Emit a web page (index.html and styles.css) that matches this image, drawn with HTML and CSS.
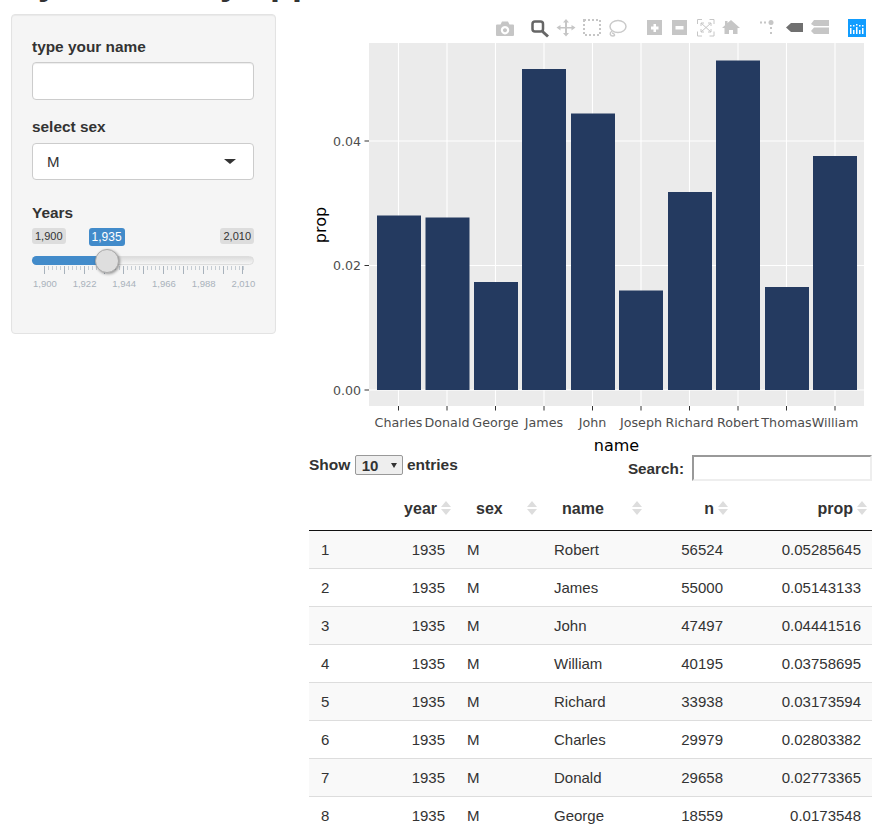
FILE: index.html
```html
<!DOCTYPE html>
<html lang="en">
<head>
    <meta charset="UTF-8">
    <meta name="viewport" content="width=device-width, initial-scale=1.0">
    <title>My first shiny app</title>
    <link rel="stylesheet" href="styles.css">
</head>
<body>
    <h2 class="page-title">My first shiny app</h2>
    <div class="layout">
        <div class="well">
            <div class="form-group">
                <label class="control-label">type your name</label>
                <input class="form-control" type="text">
            </div>
            <div class="form-group">
                <label class="control-label">select sex</label>
                <div class="selectize">
                    <span>M</span>
                    <span class="caret"></span>
                </div>
            </div>
            <div class="form-group">
                <label class="control-label">Years</label>
                <div class="slider">
                    <div class="slider-labels">
                        <span class="irs-label">1,900</span>
                        <span class="irs-label irs-from">1,935</span>
                        <span class="irs-label irs-max">2,010</span>
                    </div>
                    <div class="irs-line">
                        <div class="irs-fill"></div>
                        <div class="irs-handle"></div>
                    </div>
                    <div class="irs-ticks"></div>
                    <div class="irs-grid">
                        <span>1,900</span>
                        <span>1,922</span>
                        <span>1,944</span>
                        <span>1,966</span>
                        <span>1,988</span>
                        <span>2,010</span>
                    </div>
                </div>
            </div>
        </div>

        <div class="main">
            <svg class="plot" viewBox="309 14 563 441" width="563" height="441">
                <!-- modebar -->
                <g class="mb-icon">
                    <path fill-rule="evenodd" d="M497 24.500h3.500l1.500-3h6l1.500 3h3.500q1 0 1 1v9.500q0 1-1 1h-16q-1 0-1-1v-9.500q0-1 1-1zM505 26a4.200 4.200 0 1 0 .01 0zM505 28.200a2 2 0 1 1-.01 0z"/>
                </g>
                <g class="mb-stroke-dark">
                    <rect x="532.500" y="21.500" width="10.500" height="10" rx="2.500"/>
                    <path d="M542.500 31.500l5.500 5" stroke-width="3"/>
                </g>
                <g class="mb-icon">
                    <path d="M566 19l3 3.500h-2v4.500h4.500v-2l4 2.500-4 3v-2h-4.500v4.500h2l-3 3.500-3-3.500h2v-4.500h-4.500v2l-4-3 4-2.500v2h4.500v-4.500h-2z"/>
                </g>
                <rect class="mb-dotted" x="584" y="20" width="16" height="15"/>
                <g class="mb-stroke">
                    <ellipse cx="618" cy="26.500" rx="8" ry="6"/>
                    <path d="M612 31c-3 2-2 5 1 5s1-3-1-3"/>
                </g>
                <path class="mb-icon" fill-rule="evenodd" d="M647 20h15v15h-15zM653.500 24v2.500h-2.500v3h2.500v2.500h2.500v-2.500h2.500v-3h-2.500v-2.500z"/>
                <path class="mb-icon" fill-rule="evenodd" d="M672 20h15v15h-15zM675.500 26v3.500h8v-3.500z"/>
                <g class="mb-thin">
                    <path d="M697.500 24v-4.500h4.500M709.500 19.500h4.500v4.500M714 31.500v4.500h-4.500M702 36h-4.500v-4.500"/>
                    <path d="M701 23l10 9M711 23l-10 9M701 23h3M701 23v3M711 32h-3M711 32v-3M711 23h-3M711 23v3M701 32h3M701 32v-3"/>
                </g>
                <path class="mb-icon" d="M731 20l9 8h-2.500v6h-4.500v-4h-4v4h-4.500v-6h-2.500l3-2.700v-4.300h2.500v2.100z"/>
                <g class="mb-icon">
                    <circle cx="771" cy="22.500" r="2.500"/>
                    <rect x="760" y="21.500" width="2" height="2"/>
                    <rect x="764" y="21.500" width="2" height="2"/>
                    <rect x="770" y="27" width="2" height="2"/>
                    <rect x="770" y="32" width="2" height="2"/>
                </g>
                <path class="mb-dark" d="M786 27.500l5-4.500h12v9h-12z"/>
                <path class="mb-icon" d="M811 24l3-4h15v6h-15zM811 31l3-3.500h15v6.500h-15z"/>
                <rect class="mb-logo" x="848" y="19" width="18" height="18"/>
                <g class="mb-logo-marks">
                    <rect x="850" y="28" width="1.500" height="6"/>
                    <rect x="853" y="30" width="1.500" height="4"/>
                    <rect x="856" y="27" width="1.500" height="7"/>
                    <rect x="859" y="30" width="1.500" height="4"/>
                    <rect x="862" y="28" width="1.500" height="6"/>
                    <rect x="850" y="25" width="1.500" height="1.500"/>
                    <rect x="853" y="25" width="1.500" height="1.500"/>
                    <rect x="856" y="24" width="1.500" height="1.500"/>
                    <rect x="859" y="25" width="1.500" height="1.500"/>
                    <rect x="862" y="25" width="1.500" height="1.500"/>
                </g>

                <!-- panel and grid -->
                <rect class="panel" x="369" y="43" width="495" height="363"/>
                <path class="grid" d="M369 390H864M369 265.500H864M369 141H864M398.500 43V406M447 43V406M495.500 43V406M544 43V406M592.500 43V406M641 43V406M689.500 43V406M738 43V406M786.500 43V406M835 43V406"/>

                <!-- bars -->
                <g class="bars">
                    <rect x="377" y="215.500" width="44" height="174.500"/>
                    <rect x="425.500" y="217.500" width="44" height="172.500"/>
                    <rect x="474" y="282" width="44" height="108"/>
                    <rect x="522" y="69" width="44" height="321"/>
                    <rect x="571" y="113.500" width="44" height="276.500"/>
                    <rect x="619" y="290.500" width="44" height="99.500"/>
                    <rect x="668" y="192" width="44" height="198"/>
                    <rect x="716" y="60.500" width="44" height="329.500"/>
                    <rect x="765" y="287" width="44" height="103"/>
                    <rect x="813" y="156" width="44" height="234"/>
                </g>

                <!-- axes -->
                <path class="ticks" d="M364.500 390H369M364.500 265.500H369M364.500 141H369M398.500 406V410.500M447 406V410.500M495.500 406V410.500M544 406V410.500M592.500 406V410.500M641 406V410.500M689.500 406V410.500M738 406V410.500M786.500 406V410.500M835 406V410.500"/>
                <g class="y-labels">
                    <text x="361" y="394.500">0.00</text>
                    <text x="361" y="270">0.02</text>
                    <text x="361" y="145.500">0.04</text>
                </g>
                <g class="x-labels">
                    <text x="398.500" y="427">Charles</text>
                    <text x="447" y="427">Donald</text>
                    <text x="495.500" y="427">George</text>
                    <text x="544" y="427">James</text>
                    <text x="592.500" y="427">John</text>
                    <text x="641" y="427">Joseph</text>
                    <text x="689.500" y="427">Richard</text>
                    <text x="738" y="427">Robert</text>
                    <text x="786.500" y="427">Thomas</text>
                    <text x="835" y="427">William</text>
                </g>
                <text class="axis-title" x="616.500" y="451">name</text>
                <text class="axis-title" transform="rotate(-90 326 225)" x="326" y="225">prop</text>
            </svg>

            <div class="dt-controls">
                <div class="dt-length">
                    Show
                    <span class="dt-select-wrap">
                        <select class="dt-select"><option>10</option></select>
                    </span>
                    entries
                </div>
                <div class="dt-filter">
                    <label>Search:</label>
                    <input class="dt-search" type="search">
                </div>
            </div>

            <table class="dt">
                <colgroup>
                    <col class="c-idx">
                    <col class="c-year">
                    <col class="c-sex">
                    <col class="c-name">
                    <col class="c-n">
                    <col class="c-prop">
                </colgroup>
                <thead>
                    <tr>
                        <th class="no-sort"></th>
                        <th class="right">year</th>
                        <th>sex</th>
                        <th>name</th>
                        <th class="right">n</th>
                        <th class="right">prop</th>
                    </tr>
                </thead>
                <tbody>
                    <tr><td>1</td><td class="right">1935</td><td class="sex">M</td><td>Robert</td><td class="right count">56524</td><td class="right">0.05285645</td></tr>
                    <tr><td>2</td><td class="right">1935</td><td class="sex">M</td><td>James</td><td class="right count">55000</td><td class="right">0.05143133</td></tr>
                    <tr><td>3</td><td class="right">1935</td><td class="sex">M</td><td>John</td><td class="right count">47497</td><td class="right">0.04441516</td></tr>
                    <tr><td>4</td><td class="right">1935</td><td class="sex">M</td><td>William</td><td class="right count">40195</td><td class="right">0.03758695</td></tr>
                    <tr><td>5</td><td class="right">1935</td><td class="sex">M</td><td>Richard</td><td class="right count">33938</td><td class="right">0.03173594</td></tr>
                    <tr><td>6</td><td class="right">1935</td><td class="sex">M</td><td>Charles</td><td class="right count">29979</td><td class="right">0.02803382</td></tr>
                    <tr><td>7</td><td class="right">1935</td><td class="sex">M</td><td>Donald</td><td class="right count">29658</td><td class="right">0.02773365</td></tr>
                    <tr><td>8</td><td class="right">1935</td><td class="sex">M</td><td>George</td><td class="right count">18559</td><td class="right">0.0173548</td></tr>
                </tbody>
            </table>
        </div>
    </div>
</body>
</html>
```

FILE: styles.css
```css
html, body {
    height: 834px;
    overflow: hidden;
}
body {
    margin: 0;
    font-family: "Liberation Sans", Arial, sans-serif;
    font-size: 14px;
    color: #333;
    background-color: #fff;
}
.page-title {
    margin: -38px 0 0 8px;
    font-size: 36px;
    line-height: 40px;
    font-weight: bold;
    color: #333;
    white-space: nowrap;
}
.layout {
    display: flex;
    align-items: flex-start;
    margin-top: 12px;
    padding-left: 11px;
}

/* sidebar */
.well {
    box-sizing: border-box;
    width: 265px;
    height: 320px;
    padding: 22px 20px 19px;
    background-color: #f5f5f5;
    border: 1px solid #e3e3e3;
    border-radius: 4px;
    box-shadow: inset 0 1px 1px rgba(0, 0, 0, 0.05);
}
.form-group {
    margin-bottom: 17px;
}
.control-label {
    display: block;
    margin-bottom: 5px;
    font-size: 15.400px;
    line-height: 20px;
    font-weight: bold;
}
.form-control {
    display: block;
    box-sizing: border-box;
    width: 222px;
    height: 38px;
    border: 1px solid #ccc;
    border-radius: 4px;
    background-color: #fff;
    box-shadow: inset 0 1px 1px rgba(0, 0, 0, 0.075);
}
.selectize {
    display: flex;
    align-items: center;
    justify-content: space-between;
    box-sizing: border-box;
    width: 222px;
    height: 37px;
    margin: 6px 0 23px;
    padding: 0 17px 0 14px;
    border: 1px solid #ccc;
    border-radius: 4px;
    background-color: #fff;
    font-size: 15px;
}
.caret {
    width: 0;
    height: 0;
    border-left: 6px solid transparent;
    border-right: 6px solid transparent;
    border-top: 5px solid #333;
}

/* slider */
.slider {
    width: 222px;
    margin-top: 5px;
}
.slider-labels {
    display: flex;
    align-items: flex-start;
    height: 28px;
}
.irs-label {
    height: 16px;
    padding: 0 3px;
    font-size: 11px;
    line-height: 16px;
    border-radius: 3px;
    background-color: #ddd;
    color: #333;
}
.irs-from {
    height: 18px;
    margin-left: 23px;
    font-size: 12px;
    line-height: 18px;
    background-color: #428bca;
    color: #fff;
}
.irs-max {
    margin-left: auto;
}
.irs-line {
    position: relative;
    box-sizing: border-box;
    height: 9px;
    border: 1px solid #ddd;
    border-radius: 5px;
    background: linear-gradient(#dcdcdc, #f5f5f5);
}
.irs-fill {
    width: 75px;
    height: 9px;
    margin: -1px;
    border-radius: 5px 0 0 5px;
    background-color: #428bca;
}
.irs-handle {
    position: absolute;
    top: -8px;
    left: 62px;
    box-sizing: border-box;
    width: 24px;
    height: 24px;
    border: 1px solid #aaa;
    border-radius: 50%;
    background-color: #dedede;
    box-shadow: 1px 1px 3px rgba(0, 0, 0, 0.4);
}
.irs-ticks {
    height: 8px;
    margin: 1px 0 0 12px;
    width: 200px;
    background-image:
        repeating-linear-gradient(to right, #a8b2bc 0, #a8b2bc 1px, transparent 1px, transparent 19.85px),
        repeating-linear-gradient(to right, #c5ccd3 0, #c5ccd3 1px, transparent 1px, transparent 3.97px);
    background-size: 100% 8px, 100% 4px;
    background-repeat: no-repeat;
}
.irs-grid {
    display: grid;
    grid-template-columns: repeat(6, 39.7px);
    margin: 4px 0 0 -7px;
    font-size: 9.500px;
    line-height: 12px;
    text-align: center;
    color: #a9b2bb;
}

/* plot */
.main {
    width: 563px;
    margin-left: 33px;
}
.plot {
    display: block;
    font-family: "DejaVu Sans", sans-serif;
}
.mb-icon {
    fill: #c6c6c6;
}
.mb-dark {
    fill: #707070;
}
.mb-stroke-dark {
    fill: none;
    stroke: #666;
    stroke-width: 2.500;
}
.mb-stroke {
    fill: none;
    stroke: #cacaca;
    stroke-width: 1.500;
}
.mb-thin {
    fill: none;
    stroke: #c6c6c6;
    stroke-width: 1;
}
.mb-dotted {
    fill: none;
    stroke: #c6c6c6;
    stroke-width: 2;
    stroke-dasharray: 2 2;
}
.mb-logo {
    fill: #119dff;
}
.mb-logo-marks {
    fill: #fff;
}
.panel {
    fill: #ebebeb;
}
.grid {
    fill: none;
    stroke: #fff;
    stroke-width: 1.100;
}
.bars {
    fill: #243a60;
}
.ticks {
    fill: none;
    stroke: #333;
    stroke-width: 1;
}
.y-labels text {
    font-size: 12.600px;
    fill: #4d4d4d;
    text-anchor: end;
}
.x-labels text {
    font-size: 12.700px;
    fill: #4d4d4d;
    text-anchor: middle;
}
.axis-title {
    font-size: 16px;
    fill: #000;
    text-anchor: middle;
}

/* datatable */
.dt-controls {
    display: flex;
    justify-content: space-between;
    align-items: flex-start;
    height: 36px;
    font-weight: bold;
    font-size: 15.500px;
}
.dt-length {
    line-height: 20px;
}
.dt-select-wrap {
    position: relative;
    display: inline-block;
    vertical-align: top;
}
.dt-select-wrap::after {
    content: "";
    position: absolute;
    top: 8px;
    right: 6px;
    border-left: 3px solid transparent;
    border-right: 3px solid transparent;
    border-top: 5px solid #333;
}
.dt-select {
    display: block;
    box-sizing: border-box;
    width: 48px;
    height: 20px;
    padding: 0 0 0 6px;
    border: 1px solid #999;
    border-radius: 2px;
    background-color: #eee;
    color: #333;
    font-family: inherit;
    font-weight: bold;
    font-size: 15px;
    -webkit-appearance: none;
    appearance: none;
}
.dt-filter {
    display: flex;
    align-items: flex-end;
    gap: 8px;
    font-size: 15.300px;
}
.dt-filter label {
    line-height: 24px;
}
.dt-search {
    box-sizing: border-box;
    width: 180px;
    height: 26px;
    padding: 0;
    border: 2px solid #eee;
    border-top-color: #999;
    border-left-color: #999;
    background-color: #fff;
    -webkit-appearance: none;
    appearance: none;
}
.dt {
    table-layout: fixed;
    width: 563px;
    border-collapse: collapse;
    font-size: 15px;
}
.c-idx { width: 47px; }
.c-year { width: 100px; }
.c-sex { width: 86px; }
.c-name { width: 105px; }
.c-n { width: 86px; }
.c-prop { width: 139px; }
.dt th {
    position: relative;
    box-sizing: border-box;
    height: 39px;
    padding: 0 20px 2px;
    text-align: left;
    font-size: 16px;
    font-weight: bold;
    border-bottom: 1px solid #111;
}
.dt th.right {
    padding-right: 19px;
    text-align: right;
}
.dt th::before,
.dt th::after {
    content: "";
    position: absolute;
    right: 5px;
    border-left: 5px solid transparent;
    border-right: 5px solid transparent;
}
.dt th::before {
    top: 10px;
    border-bottom: 6px solid #ddd;
}
.dt th::after {
    top: 18px;
    border-top: 6px solid #ddd;
}
.dt th.no-sort::before,
.dt th.no-sort::after {
    display: none;
}
.dt td {
    box-sizing: border-box;
    height: 38px;
    padding: 1px 12px 0;
    border-bottom: 1px solid #ddd;
    color: #333;
}
.dt td.sex {
    padding-left: 11px;
}
.dt td.right {
    padding-right: 11px;
    text-align: right;
}
.dt td.count {
    padding-right: 10px;
}
.dt tbody tr:nth-child(odd) {
    background-color: #f9f9f9;
}
```
